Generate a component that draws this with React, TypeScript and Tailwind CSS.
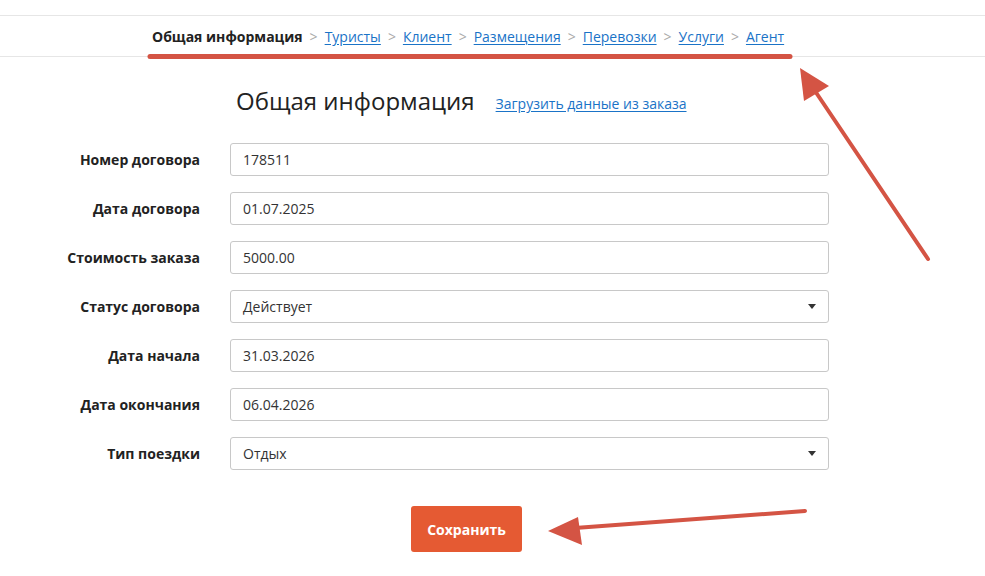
import React from "react";

const font = { fontFamily: '"Open Sans", "Noto Sans", sans-serif' };

const rows: { label: string; value: string; select?: boolean }[] = [
  { label: "Номер договора", value: "178511" },
  { label: "Дата договора", value: "01.07.2025" },
  { label: "Стоимость заказа", value: "5000.00" },
  { label: "Статус договора", value: "Действует", select: true },
  { label: "Дата начала", value: "31.03.2026" },
  { label: "Дата окончания", value: "06.04.2026" },
  { label: "Тип поездки", value: "Отдых", select: true },
];

const navLinks = ["Туристы", "Клиент", "Размещения", "Перевозки", "Услуги", "Агент"];

export default function App() {
  return (
    <div className="relative w-[985px] h-[576px] bg-white overflow-hidden" style={font}>
      <div className="h-[15px]" />
      <div className="border-t border-b border-[#e6e6e6] h-[42px] flex items-center pl-[152px] text-[14px]">
        <span className="font-bold text-[#222]">Общая информация</span>
        {navLinks.map((l) => (
          <React.Fragment key={l}>
            <span className="text-[#aaa] mx-[7px]">&gt;</span>
            <a className="text-[#1a73c7] underline underline-offset-[2px]">{l}</a>
          </React.Fragment>
        ))}
      </div>

      <div className="flex items-end pl-[236px] mt-[27px] h-[34px]">
        <h1 className="text-[24px] leading-[34px] text-[#222]">Общая информация</h1>
        <a className="ml-[21px] mb-[4px] text-[14px] text-[#1a73c7] underline underline-offset-[2px]">
          Загрузить данные из заказа
        </a>
      </div>

      <div className="mt-[25px] flex flex-col gap-[16px]">
        {rows.map((r) => (
          <div key={r.label} className="flex items-center h-[33px]">
            <div className="w-[200px] text-right font-bold text-[14px] text-[#222]">{r.label}</div>
            <div className="ml-[30px] w-[599px] h-[33px] border border-[#c8c8c8] rounded-[3px] flex items-center justify-between pl-[12px] pr-[12px] text-[14px] text-[#333]">
              <span>{r.value}</span>
              {r.select && (
                <svg width="8" height="5" viewBox="0 0 8 5">
                  <path d="M0 0 L8 0 L4 5 Z" fill="#333" />
                </svg>
              )}
            </div>
          </div>
        ))}
      </div>

      <div className="mt-[36px] pl-[411px]">
        <button className="w-[111px] h-[46px] bg-[#e55a33] rounded-[3px] text-white font-bold text-[14px]">
          Сохранить
        </button>
      </div>

      <svg className="absolute left-0 top-0 pointer-events-none" width="985" height="576">
        <line x1="150" y1="56.5" x2="790" y2="56.5" stroke="#d45444" strokeWidth="5" strokeLinecap="round" />
        <line x1="928" y1="259" x2="813" y2="88" stroke="#d45444" strokeWidth="4" strokeLinecap="round" />
        <polygon points="800,68 829,86 804,101" fill="#d45444" />
        <line x1="805" y1="511" x2="575" y2="528" stroke="#d45444" strokeWidth="4" strokeLinecap="round" />
        <polygon points="548,531 578,517 582,545" fill="#d45444" />
      </svg>
    </div>
  );
}
